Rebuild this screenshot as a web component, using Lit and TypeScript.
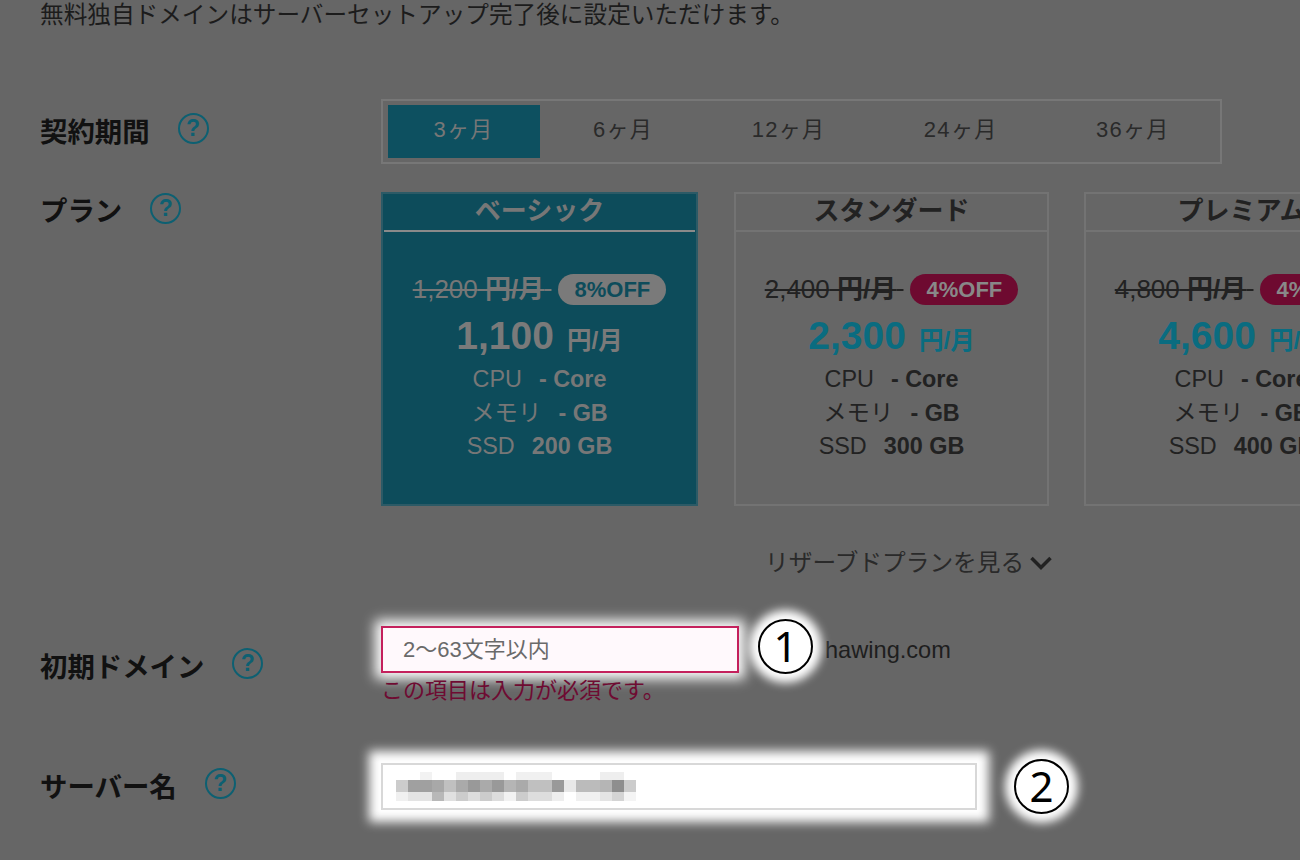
import { LitElement, html, css, svg } from "lit";
import { customElement } from "lit/decorators.js";

const TERMS = ["3ヶ月", "6ヶ月", "12ヶ月", "24ヶ月", "36ヶ月"];
const PLANS = [
  { name: "ベーシック", old: "1,200", off: "8%OFF", price: "1,100", ssd: "200 GB", on: true },
  { name: "スタンダード", old: "2,400", off: "4%OFF", price: "2,300", ssd: "300 GB", on: false },
  { name: "プレミアム", old: "4,800", off: "4%OFF", price: "4,600", ssd: "400 GB", on: false },
];
const MASK: number[][] = [
  [255, 255, 242, 255, 255, 238, 238, 238, 238, 255, 240, 240, 240, 255, 255, 255, 255, 238, 238, 255],
  [204, 160, 160, 168, 192, 170, 153, 170, 153, 181, 170, 192, 192, 153, 232, 187, 187, 181, 142, 204],
  [240, 228, 228, 184, 224, 204, 221, 204, 221, 242, 204, 221, 221, 238, 255, 240, 240, 228, 212, 244],
];
const ROW_Y = [0, 8, 20];
const ROW_H = [8, 12, 9];

@customElement("app-root")
export class AppRoot extends LitElement {
  static styles = css`
    :host {
      display: block;
      width: 1300px;
      height: 860px;
      overflow: hidden;
      position: relative;
      background: #666;
      color: #222;
      font-family: "Liberation Sans", "Noto Sans CJK JP", sans-serif;
    }
    .page { padding-left: 40px; }
    .intro {
      margin: 0 0 69px;
      font-size: 23.65px;
      line-height: 30px;
      color: #1c1c1c;
      white-space: nowrap;
    }
    .row { display: flex; align-items: flex-start; }
    .label {
      flex: none;
      width: 341px;
      display: flex;
      align-items: center;
      gap: 28px;
      font-size: 27.4px;
      font-weight: 700;
      line-height: 34px;
      color: #111;
      white-space: nowrap;
    }
    .help {
      flex: none;
      width: 31px;
      height: 31px;
      box-sizing: border-box;
      border: 2.5px solid #0d6072;
      border-radius: 50%;
      color: #0d6072;
      font-size: 23px;
      font-weight: 700;
      line-height: 26px;
      text-align: center;
    }
    .term-row { height: 65px; margin-bottom: 28px; }
    .term-row .label { padding-top: 17px; }
    .term-row .help { margin-top: -10px; }
    .tabs {
      width: 841px;
      height: 65px;
      box-sizing: border-box;
      border: 2px solid #777;
      padding: 4px 5px;
      display: flex;
      gap: 7.5px;
    }
    .tab {
      height: 53px;
      padding: 0 45.5px;
      font-size: 22px;
      letter-spacing: 1.3px;
      line-height: 50px;
      color: #2a2a2a;
      white-space: nowrap;
    }
    .tab.on { background: #0d5060; color: #777; min-width: 61px; }
    .plan-row .label { padding-top: 3px; }
    .plan-row .help { margin-top: -7px; }
    .cards { display: flex; gap: 35px; flex: none; }
    .card {
      flex: none;
      width: 315px;
      height: 314px;
      box-sizing: border-box;
      border: 2px solid #737373;
      text-align: center;
    }
    .card:first-child { width: 317px; }
    .card:nth-child(2) { margin-left: 1px; }
    .card.on { background: #0d4c5b; border-color: #2c5a66; color: #777; }
    .head {
      height: 36px;
      border-bottom: 2px solid #737373;
      font-size: 26px;
      font-weight: 700;
      line-height: 34px;
      color: #222;
    }
    .card.on .head {
      color: #777;
      border-bottom-color: #8a8a8a;
      margin: 0 1px;
    }
    .old-row {
      margin-top: 42px;
      height: 31px;
      display: flex;
      justify-content: center;
      align-items: center;
      gap: 7px;
      font-size: 26px;
      line-height: 27px;
      white-space: nowrap;
    }
    .old { text-decoration: line-through; text-decoration-thickness: 2px; }
    .old b { font-weight: 700; }
    .pill {
      height: 31px;
      padding: 0 16px;
      border-radius: 16px;
      background: #6e0a30;
      color: #888;
      font-size: 22px;
      font-weight: 700;
      line-height: 31px;
    }
    .card.on .pill { background: #7a7a7a; color: #0d4c5b; }
    .price {
      margin: 8px 0 4px;
      height: 46px;
      display: flex;
      justify-content: center;
      align-items: baseline;
      gap: 13px;
      color: #0a6c80;
      font-weight: 700;
      font-size: 39px;
      line-height: 46px;
      white-space: nowrap;
    }
    .price small { font-size: 24.5px; }
    .card.on .price { color: #7a7a7a; }
    .spec {
      font-size: 23.4px;
      line-height: 33.5px;
      white-space: nowrap;
    }
    .spec b { margin-left: 17px; font-weight: 700; }
    .more {
      margin: 40px 0 50px 384px;
      padding-left: 341px;
      height: 30px;
      display: flex;
      align-items: center;
      gap: 6px;
      font-size: 23.7px;
      color: #2a2a2a;
      white-space: nowrap;
    }
    .more svg { margin-top: 4px; }
    .domain-row .label { padding-top: 25px; }
    .domain-row .help { margin-top: -10px; }
    .field {
      display: block;
      height: 47px;
      box-sizing: border-box;
      outline: none;
      font-family: inherit;
      font-size: 22px;
      padding: 0 20px;
      background: #fff;
      color: #666;
    }
    .field::placeholder { color: #6a6a6a; opacity: 1; }
    .domain-input {
      width: 358px;
      border: 2px solid #c4205c;
      background: #fff9fc;
      box-shadow: 0 0 12px 6px #fff;
    }
    .suffix {
      margin-left: 86px;
      height: 47px;
      font-size: 23.6px;
      line-height: 49px;
      color: #1e1e1e;
      white-space: nowrap;
    }
    .domain-line { display: flex; align-items: flex-start; }
    .error {
      margin: 4px 0 58px;
      font-size: 22px;
      line-height: 28px;
      color: #6e0b32;
      white-space: nowrap;
    }
    .server-row .label { padding-top: 8px; }
    .server-row .help { margin-top: -10px; }
    .server-box { position: relative; }
    .server-input {
      width: 596px;
      border: 2px solid #d8d8d8;
      box-shadow: 0 0 10px 12px #fff;
    }
    .mosaic { position: absolute; left: 15px; top: 9px; display: block; }
    .num {
      position: absolute;
      width: 55px;
      height: 55px;
      box-sizing: border-box;
      border: 2px solid #000;
      border-radius: 50%;
      background: #fff;
      box-shadow: 0 0 10px 9px #fff;
      color: #000;
      font-family: "Noto Sans", sans-serif;
      font-size: 42px;
      line-height: 49px;
      text-align: center;
    }
    .n1 { left: 758px; top: 619px; }
    .n2 { left: 1014px; top: 759px; }
  `;

  private help() {
    return html`<span class="help">?</span>`;
  }

  render() {
    return html`
      <div class="page">
        <p class="intro">無料独自ドメインはサーバーセットアップ完了後に設定いただけます。</p>

        <div class="row term-row">
          <div class="label">契約期間 ${this.help()}</div>
          <div class="tabs">
            ${TERMS.map((t, i) => html`<div class="tab ${i === 0 ? "on" : ""}">${t}</div>`)}
          </div>
        </div>

        <div class="row plan-row">
          <div class="label">プラン ${this.help()}</div>
          <div class="cards">
            ${PLANS.map(
              (p) => html`
                <div class="card ${p.on ? "on" : ""}">
                  <div class="head">${p.name}</div>
                  <div class="old-row">
                    <span class="old">${p.old} <b>円/月</b>&nbsp;</span>
                    <span class="pill">${p.off}</span>
                  </div>
                  <div class="price"><span>${p.price}</span><small>円/月</small></div>
                  <div class="spec">CPU<b>- Core</b></div>
                  <div class="spec">メモリ<b>- GB</b></div>
                  <div class="spec">SSD<b>${p.ssd}</b></div>
                </div>
              `
            )}
          </div>
        </div>

        <div class="more">
          リザーブドプランを見る
          <svg width="22" height="14" viewBox="0 0 22 14" fill="none" stroke="#222" stroke-width="3.5">
            <polyline points="1.5,2 11,11.5 20.5,2"></polyline>
          </svg>
        </div>

        <div class="row domain-row">
          <div class="label">初期ドメイン ${this.help()}</div>
          <div>
            <div class="domain-line">
              <input class="field domain-input" placeholder="2〜63文字以内" />
              <span class="suffix">hawing.com</span>
            </div>
            <div class="error">この項目は入力が必須です。</div>
          </div>
        </div>

        <div class="row server-row">
          <div class="label">サーバー名 ${this.help()}</div>
          <div class="server-box">
            <input class="field server-input" />
            <svg class="mosaic" width="240" height="29" viewBox="0 0 240 29" shape-rendering="crispEdges">
              ${MASK.map((cols, r) =>
                cols.map(
                  (v, c) =>
                    svg`<rect x=${c * 12} y=${ROW_Y[r]} width="12" height=${ROW_H[r]} fill=${`rgb(${v},${v},${v})`}></rect>`
                )
              )}
            </svg>
          </div>
        </div>
      </div>
      <div class="num n1">1</div>
      <div class="num n2">2</div>
    `;
  }
}
